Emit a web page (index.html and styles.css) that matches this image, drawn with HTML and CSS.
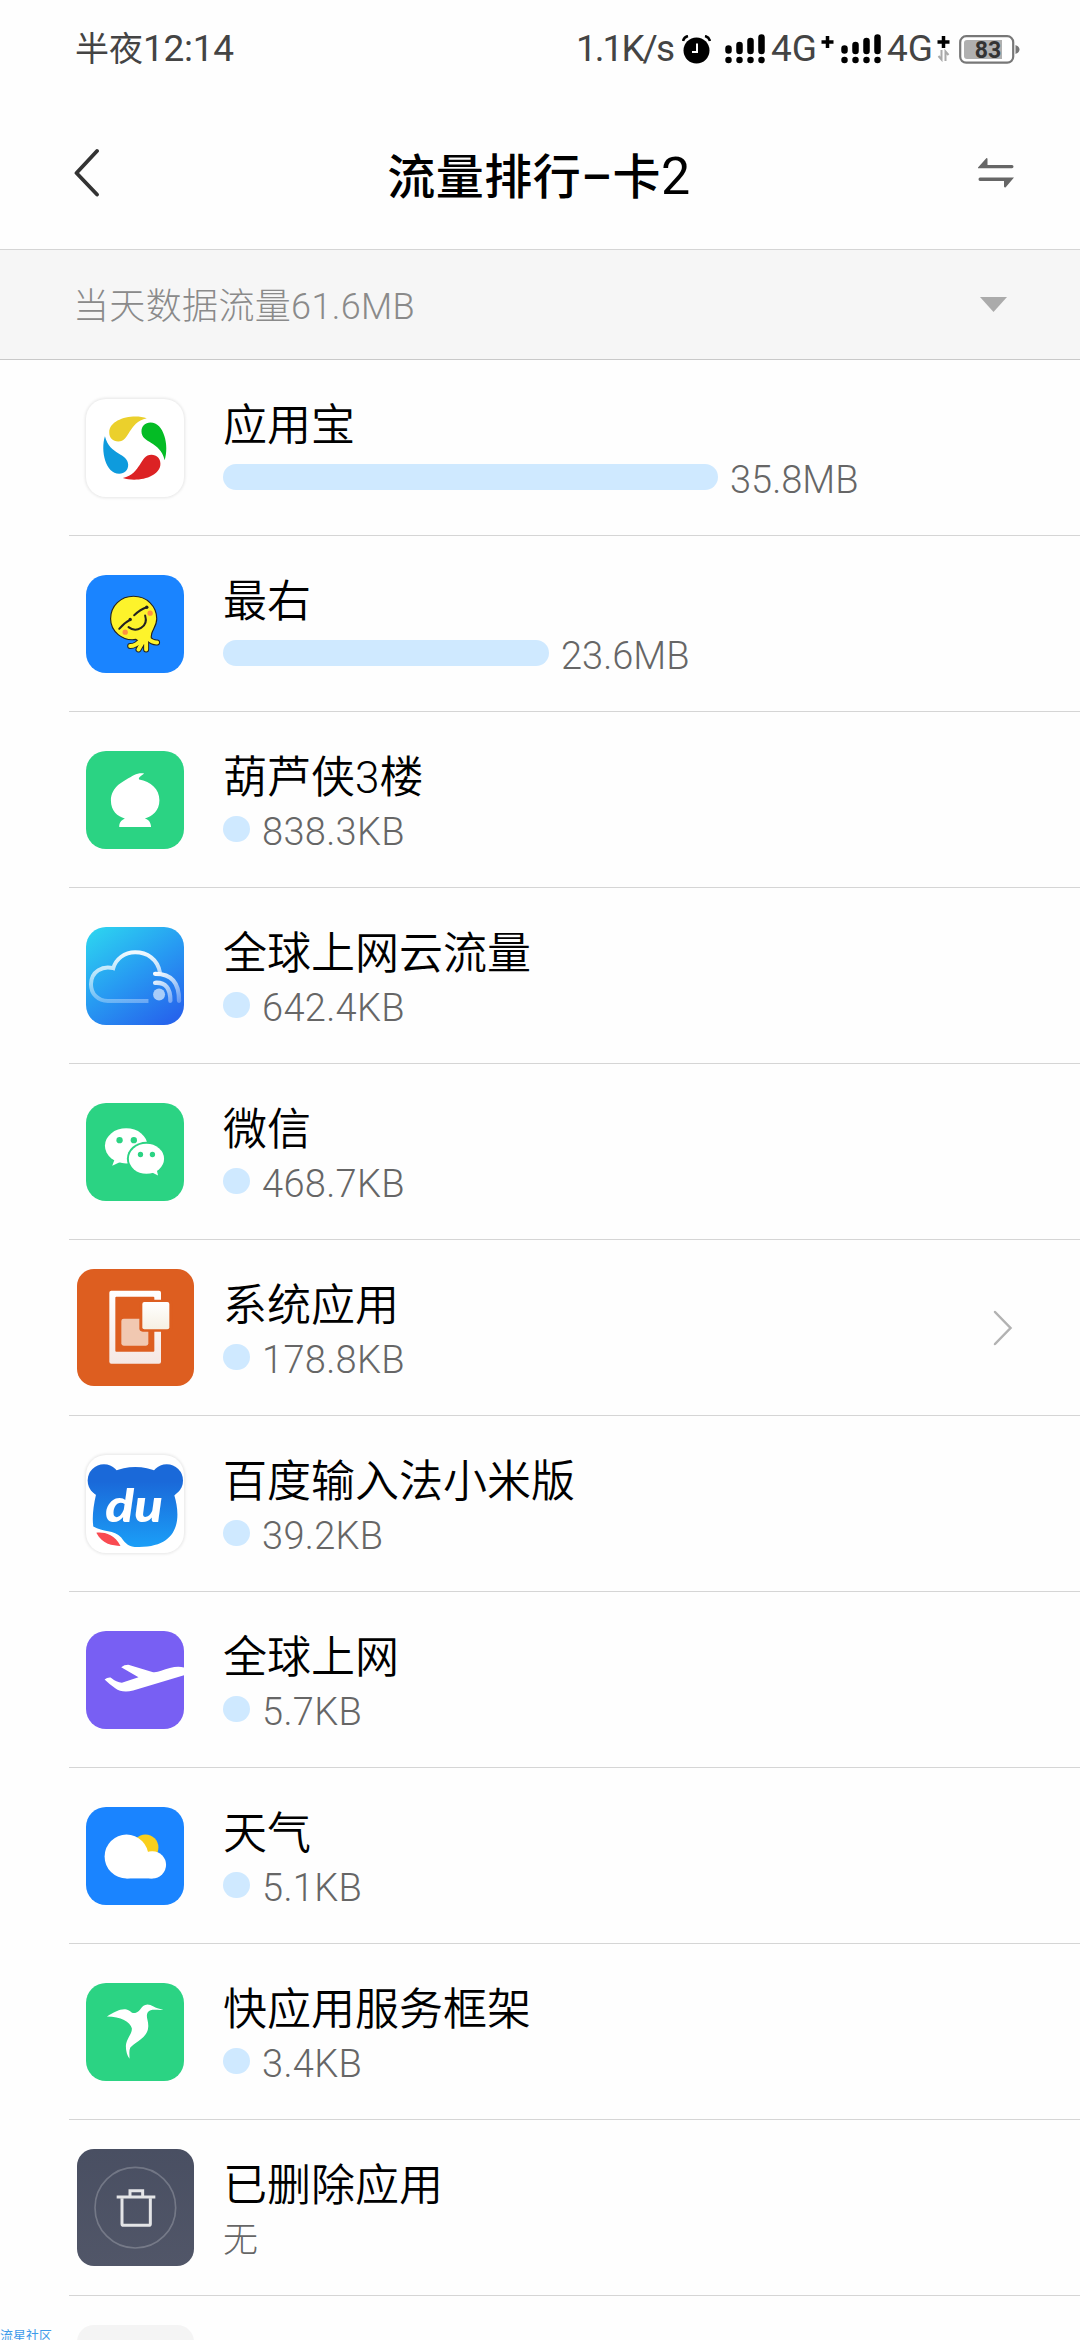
FILE: index.html
```
<!DOCTYPE html>
<html lang="zh-CN">
  <head>
    <meta charset="UTF-8" />
    <meta name="viewport" content="width=device-width, initial-scale=1.0" />
    <title>流量排行</title>
    <link rel="stylesheet" href="styles.css">
  </head>
  <body>
    <div class="status-bar">
      <span class="clock">半夜<span class="clock-time">12:14</span></span>
      <div class="status-right">
        <span class="speed">1.1K/s</span>
        <svg class="alarm" width="29" height="29" viewBox="0 0 29 29">
          <circle cx="14.500" cy="15.500" r="13" />
          <path d="M1 6 Q2 2 6 1M28 6 Q27 2 23 1" fill="none" stroke="#000" stroke-width="2.500" />
          <path d="M15 8.500V17H10" fill="none" stroke="#fff" stroke-width="2" />
        </svg>
        <svg class="signal" width="41" height="30" viewBox="0 0 41 30">
          <path d="M3.500 14.500v2M14.500 11v6M25.500 7v10M36.500 3.500v13.500M3.500 26v.1M14.500 26v.1M25.500 26v.1M36.500 26v.1" />
        </svg>
        <span class="network">4G</span>
        <svg class="plus" width="13" height="26" viewBox="0 0 13 26">
          <path d="M6.500 0v12M.5 6h12" />
        </svg>
        <svg class="signal second" width="41" height="30" viewBox="0 0 41 30">
          <path d="M3.500 14.500v2M14.500 11v6M25.500 7v10M36.500 3.500v13.500M3.500 26v.1M14.500 26v.1M25.500 26v.1M36.500 26v.1" />
        </svg>
        <span class="network">4G</span>
        <svg class="plus" width="13" height="26" viewBox="0 0 13 26">
          <path d="M6.500 0v12M.5 6h12" />
          <path class="transfer" d="M4.500 14v9.500L1.500 20M8.500 25v-9.500L11.500 19" />
        </svg>
        <svg class="battery" width="61" height="29" viewBox="0 0 61 29">
          <rect x="1.200" y="1.200" width="53" height="26.500" rx="6" fill="#fff" stroke="#777" stroke-width="2.200" />
          <path d="M8 5h35v19H8a3 3 0 0 1-3-3V8a3 3 0 0 1 3-3z" fill="#b0b0b0" />
          <path d="M56.500 10q4 1.500 4 4.500t-4 4.500z" fill="#777" />
          <text x="29" y="22.500" text-anchor="middle">83</text>
        </svg>
      </div>
    </div>

    <header class="title-bar">
      <svg width="26" height="50" viewBox="0 0 26 50">
        <path d="M23 3L2.500 25L23 46.500" fill="none" stroke="#333" stroke-width="3.800" stroke-linecap="round" stroke-linejoin="round" />
      </svg>
      <h1>流量排行–卡<span class="sim">2</span></h1>
      <svg width="36" height="30" viewBox="0 0 36 30">
        <path d="M0 9.500L8.500 0q1 0 1 1V7H34q1.500 0 1.500 1.500T34 10.200H0zM36 19.500L27.500 29.500q-1.500 0-1.500-1V23H2q-1.500 0-1.500-1.700T2 19.500z" fill="#666" />
      </svg>
    </header>

    <div class="summary">
      <span>当天数据流量61.6MB</span>
      <svg width="27" height="15" viewBox="0 0 27 15">
        <path d="M0 0h27L13.500 15z" fill="#ababab" />
      </svg>
    </div>

    <main class="app-list">
      <section class="app">
        <div class="icon">
          <svg class="plain" viewBox="0 0 295 295">
            <path d="M183 58C140 44 70 60 70 101C70 117 81 128 97 128C133 128 125 72 183 58Z" fill="#ebd02c" />
            <path d="M183 58C140 44 70 60 70 101C70 117 81 128 97 128C133 128 125 72 183 58Z" fill="#04bc25" transform="rotate(90 147 148)" />
            <path d="M183 58C140 44 70 60 70 101C70 117 81 128 97 128C133 128 125 72 183 58Z" fill="#dc2224" transform="rotate(180 147 148)" />
            <path d="M183 58C140 44 70 60 70 101C70 117 81 128 97 128C133 128 125 72 183 58Z" fill="#0e9bdd" transform="rotate(270 147 148)" />
          </svg>
        </div>
        <div class="info">
          <h2>应用宝</h2>
          <div class="usage"><span class="bar" style="width: 495px"></span><span class="value mb">35.8MB</span></div>
        </div>
      </section>

      <section class="app">
        <div class="icon">
          <svg class="blue" viewBox="0 0 295 295">
            <g fill="none" stroke-linecap="round">
              <path d="M166 196Q150 214 133 214M172 200L158 224M181 200V224M186 190Q200 204 214 203" stroke="#222" stroke-width="18" />
              <path d="M150 194C110 200 74 170 74 132C74 92 105 64 143 64C183 64 213 94 213 132C213 160 192 168 197 192L170 208Z" fill="#fdf32b" stroke="#222" stroke-width="3.500" />
              <path d="M166 196Q150 214 133 214M172 200L158 224M181 200V224M186 190Q200 204 214 203" stroke="#fdf32b" stroke-width="12" />
              <path d="M100 162Q116 143 133 135M145 121Q164 103 183 97" stroke="#222" stroke-width="6" />
              <path d="M128 157C151 175 189 157 178 122" stroke="#222" stroke-width="6" />
            </g>
            <circle cx="133" cy="134" r="5" fill="#222" />
            <circle cx="183" cy="97" r="5" fill="#222" />
            <circle cx="118" cy="172" r="8" fill="#ff9140" />
            <circle cx="193" cy="115" r="8" fill="#ff9140" />
          </svg>
        </div>
        <div class="info">
          <h2>最右</h2>
          <div class="usage"><span class="bar" style="width: 326px"></span><span class="value mb">23.6MB</span></div>
        </div>
      </section>

      <section class="app">
        <div class="icon">
          <svg class="green" viewBox="0 0 295 295">
            <path d="M175 68C168 74 156 80 160 86C195 92 221 115 221 148C221 180 200 196 177 203C190 207 195 215 196 229H100C100 215 106 208 117 203C95 198 75 180 75 150C75 105 115 90 145 72C155 67 168 66 175 68Z" fill="#fff" />
          </svg>
        </div>
        <div class="info">
          <h2>葫芦侠3楼</h2>
          <div class="usage"><span class="bar"></span><span class="value">838.3KB</span></div>
        </div>
      </section>

      <section class="app">
        <div class="icon">
          <svg viewBox="0 0 295 295">
            <defs>
              <linearGradient id="sky" x1="0.1" y1="0" x2="0.8" y2="1">
                <stop offset="0" stop-color="#2dd3f0" />
                <stop offset="0.5" stop-color="#279bf2" />
                <stop offset="1" stop-color="#2665ec" />
              </linearGradient>
              <linearGradient id="mist" gradientUnits="userSpaceOnUse" x1="0" y1="70" x2="0" y2="230">
                <stop offset="0" stop-color="#fff" stop-opacity="0.95" />
                <stop offset="1" stop-color="#fff" stop-opacity="0.3" />
              </linearGradient>
              <linearGradient id="wave" gradientUnits="userSpaceOnUse" x1="200" y1="140" x2="270" y2="230">
                <stop offset="0" stop-color="#fff" />
                <stop offset="1" stop-color="#fff" stop-opacity="0.3" />
              </linearGradient>
            </defs>
            <rect width="295" height="295" fill="url(#sky)" />
            <path d="M223 138C216 96 183 76 148 76C116 76 90 96 82 124C50 115 15 135 15 172C15 201 36 223 66 223H188" fill="none" stroke="url(#mist)" stroke-width="12" />
            <g fill="none" stroke="url(#wave)" stroke-width="13" stroke-linecap="round">
              <path d="M208 168Q255 165 254 222" />
              <path d="M208 141Q281 140 280 222" />
            </g>
            <circle cx="220" cy="203" r="18" fill="#a8cdf9" />
          </svg>
        </div>
        <div class="info">
          <h2>全球上网云流量</h2>
          <div class="usage"><span class="bar"></span><span class="value">642.4KB</span></div>
        </div>
      </section>

      <section class="app">
        <div class="icon">
          <svg class="green" viewBox="0 0 295 295">
            <path d="M88 165L79 189L106 176Z" fill="#fff" />
            <ellipse cx="121" cy="129" rx="64" ry="53" fill="#fff" />
            <ellipse cx="182" cy="168" rx="59" ry="51" fill="#2bd383" />
            <ellipse cx="182" cy="168" rx="53" ry="45" fill="#fff" />
            <path d="M196 208L217 218L212 198Z" fill="#fff" />
            <g fill="#2bd383">
              <circle cx="101" cy="112" r="9.500" />
              <circle cx="144" cy="112" r="9.500" />
              <circle cx="164" cy="155" r="8" />
              <circle cx="200" cy="155" r="8" />
            </g>
          </svg>
        </div>
        <div class="info">
          <h2>微信</h2>
          <div class="usage"><span class="bar"></span><span class="value">468.7KB</span></div>
        </div>
      </section>

      <section class="app">
        <div class="icon">
          <svg class="large orange" viewBox="0 0 351 351">
            <defs>
              <linearGradient id="phone" x1="0" y1="0" x2="0" y2="1">
                <stop offset="0" stop-color="#fff" />
                <stop offset="1" stop-color="#f5e8e4" />
              </linearGradient>
              <linearGradient id="tile" x1="0" y1="0" x2="0" y2="1">
                <stop offset="0" stop-color="#fff" />
                <stop offset="1" stop-color="#f6f0e3" />
              </linearGradient>
            </defs>
            <rect x="97" y="65" width="155" height="219" rx="6" fill="url(#phone)" />
            <rect x="115" y="83" width="117" height="165" rx="3" fill="#dd5e20" />
            <rect x="133" y="149" width="81" height="81" rx="7" fill="#f1c8b1" />
            <rect x="187" y="92" width="100" height="96" rx="10" fill="#dd5e20" />
            <rect x="196" y="99" width="81" height="82" rx="6" fill="url(#tile)" />
          </svg>
        </div>
        <div class="info">
          <h2>系统应用</h2>
          <div class="usage"><span class="bar"></span><span class="value">178.8KB</span></div>
        </div>
        <svg class="more" width="20" height="36" viewBox="0 0 20 36">
          <path d="M2 2L17.500 18L2 34" fill="none" stroke="#b2b2b2" stroke-width="2.500" stroke-linecap="round" />
        </svg>
      </section>

      <section class="app">
        <div class="icon">
          <svg class="plain" viewBox="0 0 295 295">
            <defs>
              <linearGradient id="bear" gradientUnits="userSpaceOnUse" x1="0" y1="80" x2="0" y2="276">
                <stop offset="0" stop-color="#1a69d9" />
                <stop offset="1" stop-color="#1b9ef7" />
              </linearGradient>
            </defs>
            <g fill="url(#bear)">
              <circle cx="54" cy="77" r="49" />
              <circle cx="243" cy="77" r="49" />
              <path d="M82 50C120 31 177 31 215 50L280 105L266 122C285 185 285 276 160 277C130 278 120 268 106 248C85 225 50 232 22 215C18 190 22 155 30 120L15 105Z" />
            </g>
            <path d="M31 234C55 232 85 237 104 274C80 272 50 270 31 234Z" fill="#f94b52" />
            <text class="du" x="58" y="201" textLength="174" lengthAdjust="spacingAndGlyphs">du</text>
          </svg>
        </div>
        <div class="info">
          <h2>百度输入法小米版</h2>
          <div class="usage"><span class="bar"></span><span class="value">39.2KB</span></div>
        </div>
      </section>

      <section class="app">
        <div class="icon">
          <svg class="purple" viewBox="0 0 295 295">
            <path d="M56 146Q64 139 74 140Q92 155 108 156L158 139L106 109Q116 101 130 102L202 124Q214 125 226 120C250 111 275 103 295 110V133L142 179Q108 187 88 172Q70 160 56 146Z" fill="#fff" />
          </svg>
        </div>
        <div class="info">
          <h2>全球上网</h2>
          <div class="usage"><span class="bar"></span><span class="value">5.7KB</span></div>
        </div>
      </section>

      <section class="app">
        <div class="icon">
          <svg class="blue" viewBox="0 0 295 295">
            <circle cx="179" cy="122" r="39" fill="#f9cf1d" />
            <circle cx="122" cy="149" r="66" fill="#fff" />
            <circle cx="200" cy="174" r="41" fill="#fff" />
            <rect x="122" y="135" width="78" height="80" fill="#fff" />
          </svg>
        </div>
        <div class="info">
          <h2>天气</h2>
          <div class="usage"><span class="bar"></span><span class="value">5.1KB</span></div>
        </div>
      </section>

      <section class="app">
        <div class="icon">
          <svg class="green" viewBox="0 0 295 295">
            <path d="M63 101C85 88 105 76 122 80C136 83 135 93 148 90C165 88 165 66 185 65C198 65 205 76 233 81C215 83 195 76 186 88C178 102 190 115 187 135C185 165 145 180 133 195C129 205 131 215 131 228C124 220 120 205 120 190C122 165 139 155 138 136C133 118 105 101 63 101Z" fill="#fff" />
          </svg>
        </div>
        <div class="info">
          <h2>快应用服务框架</h2>
          <div class="usage"><span class="bar"></span><span class="value">3.4KB</span></div>
        </div>
      </section>

      <section class="app">
        <div class="icon">
          <svg class="large dark" viewBox="0 0 351 351">
            <circle cx="175" cy="176" r="121" fill="none" stroke="#fff" stroke-opacity="0.22" stroke-width="5" />
            <g fill="none" stroke="#e4e5e7" stroke-width="9">
              <path d="M119 144H235M159 144V125H197V144" />
              <path d="M135 148V225Q135 229 139 229H216Q220 229 220 225V148" />
            </g>
          </svg>
        </div>
        <div class="info">
          <h2>已删除应用</h2>
          <div class="usage"><span class="value none">无</span></div>
        </div>
      </section>

      <section class="app">
        <div class="icon">
          <svg class="large light" viewBox="0 0 351 351"></svg>
        </div>
      </section>
    </main>

    <span class="watermark">流星社区</span>
  </body>
</html>
```
FILE: styles.css
```
:root {
  --bar-color: #cfe9ff;
  --line-color: #d5d5d5;
  --blue: #1a84ff;
  --green: #2bd383;
}

* {
  margin: 0;
  padding: 0;
  box-sizing: border-box;
}

body {
  position: relative;
  height: 2340px;
  overflow: hidden;
  background: #fefefe;
  color: #000;
  font-family: Roboto, "Noto Sans CJK SC", sans-serif;
  font-weight: 300;
}

svg {
  display: block;
  flex: none;
}

.status-bar {
  display: flex;
  justify-content: space-between;
  height: 100px;
  padding: 0 60px 0 75px;
  color: #444;
  font-size: 34px;
  font-weight: 400;
  line-height: 98px;
}

.clock-time {
  font-size: 37px;
  letter-spacing: -0.3px;
}

.status-right {
  display: flex;
  align-items: center;
  height: 98px;
}

.speed {
  margin-right: 9px;
  font-size: 37px;
  letter-spacing: -2px;
}

.signal {
  margin-left: 14px;
  fill: none;
  stroke: #000;
  stroke-width: 6.5;
  stroke-linecap: round;
}

.signal.second {
  margin-left: 7px;
}

.network {
  width: 50px;
  margin-left: 5px;
  font-size: 37px;
}

.plus {
  fill: none;
  stroke: #000;
  stroke-width: 3.5;
}

.plus .transfer {
  stroke: #aaa;
  stroke-width: 2;
}

.battery {
  margin-left: 9px;
}

.battery text {
  fill: #333;
  font-size: 23px;
  font-weight: 700;
}

.title-bar {
  display: flex;
  align-items: center;
  justify-content: space-between;
  height: 150px;
  padding: 0 66px 4px 74px;
  border-bottom: 1px solid var(--line-color);
}

.title-bar h1 {
  font-size: 48px;
  font-weight: 500;
  letter-spacing: 0.5px;
}

.title-bar .sim {
  font-size: 52px;
  font-weight: 400;
  line-height: 1;
}

.summary {
  display: flex;
  align-items: center;
  justify-content: space-between;
  height: 110px;
  padding: 0 73px 3px;
  border-bottom: 1px solid #c9c9c9;
  background: #f6f6f6;
  color: #8a8a8a;
  font-size: 36px;
  letter-spacing: 0.35px;
}

.summary svg {
  margin-top: 2px;
}

/* the last row is cut off by the bottom of the screen */
.app-list {
  height: 1980px;
  overflow: hidden;
}

.app {
  display: flex;
  height: 176px;
  margin-left: 69px;
  padding-left: 8px;
  border-bottom: 1px solid var(--line-color);
}

.icon {
  display: flex;
  align-items: center;
  width: 117px;
  margin-right: 29px;
}

.icon svg {
  width: 98px;
  height: 98px;
  margin-left: 9px;
  border-radius: 20px;
}

.icon .large {
  width: 117px;
  height: 117px;
  margin-left: 0;
  border-radius: 17px;
}

.plain {
  background: #fff;
  box-shadow: 0 0 3px 1px #e6e6e6;
}

.blue {
  background: var(--blue);
}

.green {
  background: var(--green);
}

.purple {
  background: #785ff3;
}

.orange {
  background: #dd5e20;
}

.dark {
  background: linear-gradient(#494f62, #515668);
}

.light {
  background: #f4f4f4;
}

.du {
  fill: #fff;
  font: italic 900 140px Lato, sans-serif;
}

.info {
  flex: 1;
  padding-top: 36px;
}

.info h2 {
  font-size: 44px;
  font-weight: 350;
  line-height: 60px;
}

.usage {
  display: flex;
  align-items: center;
  height: 46px;
}

.bar {
  width: 27px;
  height: 26px;
  margin: 0 12px 4px 0;
  border-radius: 13px;
  background: var(--bar-color);
}

.value {
  padding-top: 1px;
  color: #666;
  font-size: 38px;
  letter-spacing: 0.3px;
  line-height: 46px;
}

.value.mb {
  letter-spacing: 0;
}

.value.none {
  padding-top: 3px;
  font-size: 35px;
}

.more {
  align-self: center;
  margin-right: 67px;
}

.watermark {
  position: absolute;
  left: 0;
  bottom: -4px;
  height: 17px;
  overflow: hidden;
  color: #3f9bea;
  font-size: 13px;
  font-weight: 400;
  line-height: 17px;
}
```
